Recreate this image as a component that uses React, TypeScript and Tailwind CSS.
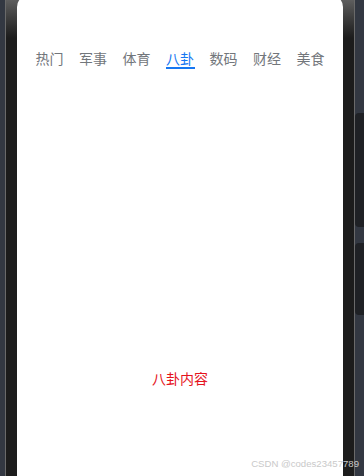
import React, { useState } from 'react';

const tabs = ['热门', '军事', '体育', '八卦', '数码', '财经', '美食'];

const App: React.FC = () => {
  const [active, setActive] = useState(3);

  return (
    <div
      className="relative w-[364px] h-[476px] overflow-hidden bg-[#333842] flex"
      style={{ fontFamily: '"Noto Sans CJK SC", "Noto Sans", sans-serif' }}
    >
      {/* phone body */}
      <div className="ml-[5px] w-[350px] h-full flex border-l border-r border-[#6a6a6a] bg-[#1c1c1c] bg-gradient-to-b from-[#5e5e5e] via-[#1c1c1c] via-[8%] to-[#1c1c1c]">
        <div className="mx-[11px] mt-[-5px] w-[324px] flex-1 bg-white rounded-t-[12px] flex flex-col">
          {/* tab bar */}
          <div className="pt-[53px] flex justify-center">
            {tabs.map((t, i) => (
              <button
                key={t}
                onClick={() => setActive(i)}
                className="w-[43.5px] flex flex-col items-center"
              >
                <span
                  className={`text-[14px] leading-[20px] ${i === active ? 'text-[#1677f2]' : 'text-[#72767b]'}`}
                >
                  {t}
                </span>
                <span
                  className={`mt-[-1px] h-[2px] w-[29px] ${i === active ? 'bg-[#1677f2]' : 'bg-transparent'}`}
                />
              </button>
            ))}
          </div>

          {/* content */}
          <div className="flex-1 flex items-center justify-center pt-[210px]">
            <span className="text-[14px] leading-[20px] text-[#e5131d]">{tabs[active]}内容</span>
          </div>
        </div>
      </div>

      {/* side buttons */}
      <div className="flex-1 flex flex-col pt-[113px]">
        <div className="h-[114px] bg-[#1f2125] rounded-l-[4px]" />
        <div className="mt-[16px] h-[72px] bg-[#1f2125] rounded-l-[4px]" />
      </div>

      {/* watermark */}
      <span
        className="absolute right-[5px] bottom-[6px] text-[9.6px] leading-[12px] text-[#c9c9c9]"
        style={{ fontFamily: '"Liberation Sans", Arial, sans-serif' }}
      >
        CSDN @codes23457789
      </span>
    </div>
  );
};

export default App;
